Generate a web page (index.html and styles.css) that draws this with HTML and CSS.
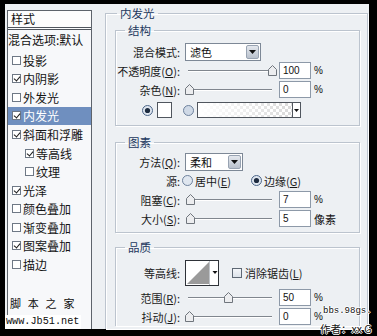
FILE: index.html
```html
<!DOCTYPE html>
<html lang="zh-CN">
<head>
<meta charset="utf-8">
<title>图层样式 - 内发光</title>
<link rel="stylesheet" href="styles.css">
</head>
<body>
<div class="screen">
  <div class="dialog">
    <aside class="sidebar">
      <div class="side-head">样式</div>
      <div class="side-blend">混合选项:默认</div>
      <ul class="fx-list">
        <li class="fx"><span class="cb"></span>投影</li>
        <li class="fx"><span class="cb on"></span>内阴影</li>
        <li class="fx"><span class="cb"></span>外发光</li>
        <li class="fx sel"><span class="cb on"></span>内发光</li>
        <li class="fx"><span class="cb on"></span>斜面和浮雕</li>
        <li class="fx sub"><span class="cb on"></span>等高线</li>
        <li class="fx sub"><span class="cb"></span>纹理</li>
        <li class="fx"><span class="cb on"></span>光泽</li>
        <li class="fx"><span class="cb"></span>颜色叠加</li>
        <li class="fx"><span class="cb"></span>渐变叠加</li>
        <li class="fx"><span class="cb on"></span>图案叠加</li>
        <li class="fx"><span class="cb"></span>描边</li>
      </ul>
      <div class="wm-cn">脚本之家</div>
      <div class="wm-url">www.Jb51.net</div>
    </aside>

    <main class="main">
      <fieldset class="grp outer">
        <legend>内发光</legend>

        <fieldset class="grp g-struct">
          <legend>结构</legend>
          <div class="row">
            <span class="lbl">混合模式:</span>
            <div class="select w-mode"><span class="sel-text">滤色</span><span class="sel-btn"><svg width="7" height="4" viewBox="0 0 7 4"><path d="M0 0H7L3.5 4Z" fill="#111"/></svg></span></div>
          </div>
          <div class="row">
            <span class="lbl">不透明度(<u>O</u>):</span>
            <div class="slider"><svg class="thumb" style="left:83px" width="9" height="11" viewBox="0 0 9 11"><path d="M4.5 0.5L8.5 4.5V10.5H0.5V4.5Z" fill="#ecedef" stroke="#6f757c"/></svg></div>
            <span class="num">100</span><span class="unit">%</span>
          </div>
          <div class="row">
            <span class="lbl">杂色(<u>N</u>):</span>
            <div class="slider"><svg class="thumb" style="left:0px" width="9" height="11" viewBox="0 0 9 11"><path d="M4.5 0.5L8.5 4.5V10.5H0.5V4.5Z" fill="#ecedef" stroke="#6f757c"/></svg></div>
            <span class="num">0</span><span class="unit">%</span>
          </div>
          <div class="row row-color">
            <svg class="radio r-first" width="11" height="11" viewBox="0 0 11 11"><circle cx="5.5" cy="5.5" r="5" fill="#dfe6ef" stroke="#4d6688"/><circle cx="5.5" cy="5.5" r="2.6" fill="#1d2b3f"/></svg>
            <span class="swatch"></span>
            <svg class="radio r-second" width="11" height="11" viewBox="0 0 11 11"><circle cx="5.5" cy="5.5" r="5" fill="#cfd9e6" stroke="#6d819c"/></svg>
            <div class="gradient"><span class="grad-bar"></span><span class="grad-btn"><svg width="5" height="3" viewBox="0 0 5 3"><path d="M0 0H5L2.5 3Z" fill="#111"/></svg></span></div>
          </div>
        </fieldset>

        <fieldset class="grp g-elem">
          <legend>图素</legend>
          <div class="row">
            <span class="lbl">方法(<u>Q</u>):</span>
            <div class="select w-method"><span class="sel-text">柔和</span><span class="sel-btn"><svg width="7" height="4" viewBox="0 0 7 4"><path d="M0 0H7L3.5 4Z" fill="#111"/></svg></span></div>
          </div>
          <div class="row">
            <span class="lbl">源:</span>
            <svg class="radio r-src" width="11" height="11" viewBox="0 0 11 11"><circle cx="5.5" cy="5.5" r="5" fill="#dfe6ef" stroke="#6d819c"/></svg>
            <span class="opt">居中(<u>E</u>)</span>
            <svg class="radio r-edge" width="11" height="11" viewBox="0 0 11 11"><circle cx="5.5" cy="5.5" r="5" fill="#dfe6ef" stroke="#4d6688"/><circle cx="5.5" cy="5.5" r="2.6" fill="#1d2b3f"/></svg>
            <span class="opt">边缘(<u>G</u>)</span>
          </div>
          <div class="row">
            <span class="lbl">阻塞(<u>C</u>):</span>
            <div class="slider"><svg class="thumb" style="left:1px" width="9" height="11" viewBox="0 0 9 11"><path d="M4.5 0.5L8.5 4.5V10.5H0.5V4.5Z" fill="#ecedef" stroke="#6f757c"/></svg></div>
            <span class="num">7</span><span class="unit">%</span>
          </div>
          <div class="row">
            <span class="lbl">大小(<u>S</u>):</span>
            <div class="slider"><svg class="thumb" style="left:1px" width="9" height="11" viewBox="0 0 9 11"><path d="M4.5 0.5L8.5 4.5V10.5H0.5V4.5Z" fill="#ecedef" stroke="#6f757c"/></svg></div>
            <span class="num">5</span><span class="unit unit-cn">像素</span>
          </div>
        </fieldset>

        <fieldset class="grp g-qual">
          <legend>品质</legend>
          <div class="row row-contour">
            <span class="lbl">等高线:</span>
            <div class="contour">
              <svg width="34" height="26" viewBox="0 0 34 26"><rect x="0.5" y="0.5" width="33" height="25" fill="#fff" stroke="#2e3238"/><path d="M2 24L24 2V24Z" fill="#9a9a9a"/><line x1="24.5" y1="1" x2="24.5" y2="25" stroke="#bfc3c8"/><path d="M27.5 11H32.5L30 14Z" fill="#111"/></svg>
            </div>
            <span class="cb2"></span>
            <span class="opt">消除锯齿(<u>L</u>)</span>
          </div>
          <div class="row">
            <span class="lbl">范围(<u>R</u>):</span>
            <div class="slider"><svg class="thumb" style="left:39px" width="9" height="11" viewBox="0 0 9 11"><path d="M4.5 0.5L8.5 4.5V10.5H0.5V4.5Z" fill="#ecedef" stroke="#6f757c"/></svg></div>
            <span class="num">50</span><span class="unit">%</span>
          </div>
          <div class="row">
            <span class="lbl">抖动(<u>J</u>):</span>
            <div class="slider"><svg class="thumb" style="left:0px" width="9" height="11" viewBox="0 0 9 11"><path d="M4.5 0.5L8.5 4.5V10.5H0.5V4.5Z" fill="#ecedef" stroke="#6f757c"/></svg></div>
            <span class="num">0</span><span class="unit">%</span>
          </div>
        </fieldset>
      </fieldset>
    </main>
  </div>
  <div class="wm-bbs">bbs.98gs.</div>
  <div class="wm-author">作者：xx G</div>
</div>
</body>
</html>
```

FILE: styles.css
```css
* { box-sizing: border-box; }
html, body { margin: 0; padding: 0; }
body {
  width: 377px;
  height: 336px;
  overflow: hidden;
  background: #000;
  font-family: "Noto Sans CJK SC", "Noto Sans", sans-serif;
  font-size: 12px;
  color: #1b1b1b;
}
u { text-decoration: underline; text-underline-offset: 1px; }

.screen {
  position: relative;
  width: 377px;
  height: 336px;
  padding: 4px 8px 7px 5px;
}
.dialog {
  display: flex;
  height: 325px;
  background: #edf0f3;
}

/* ---------- left style list ---------- */
.sidebar {
  margin: 6px 0 0 2px;
  width: 85px;
  border: 1px solid #5d636b;
  border-bottom: none;
  background: #f7f8fa;
  display: flex;
  flex-direction: column;
}
.side-head {
  height: 19px;
  padding-left: 3px;
  line-height: 16px;
  background: #fcfcfc;
  border-bottom: 3px double #4f555d;
  color: #111;
}
.side-blend {
  height: 21px;
  line-height: 20px;
  padding-left: 0;
  color: #111;
}
.fx-list {
  list-style: none;
  margin: 0;
  padding: 0;
}
.fx {
  height: 18.55px;
  display: flex;
  align-items: center;
  padding-left: 4px;
  color: #151515;
  white-space: nowrap;
}
.fx.sub { padding-left: 17px; }
.fx.sel { background: #6f8fbf; color: #fff; }
.cb {
  position: relative;
  width: 9px;
  height: 9px;
  margin-right: 2px;
  border: 1px solid #6e7885;
  background: #fff;
  flex: none;
}
.cb.on::after {
  content: "";
  position: absolute;
  left: 2px;
  top: 0;
  width: 3px;
  height: 5px;
  border: solid #1c1c1c;
  border-width: 0 1.5px 1.5px 0;
  transform: rotate(40deg);
}
.wm-cn {
  margin-top: auto;
  padding-left: 2px;
  height: 20px;
  line-height: 20px;
  font-size: 11px;
  letter-spacing: 6.8px;
  color: #0d0d0d;
}
.wm-url {
  margin: 2px 10px 0 -3px;
  height: 14px;
  line-height: 14px;
  padding-left: 1px;
  background: #fff;
  font-family: "Liberation Mono", monospace;
  font-size: 10.2px;
  color: #0d0d0d;
}

/* ---------- right panel ---------- */
.main {
  margin: 2px 0 0 13px;
  width: 263px;
  font-size: 11px;
}
.grp {
  margin: 0;
  min-width: 0;
  border: 1px solid #bcc4ce;
  box-shadow: inset 1px 1px 0 #fff, 1px 1px 0 #fff;
}
.grp > legend {
  padding: 0 3px;
  line-height: 14px;
  font-size: 11.5px;
  color: #23385e;
}
.outer {
  height: 323px;
  padding: 0 7px 0 9px;
  border-bottom: none;
}
.outer > legend { margin-left: 2px; }
.g-struct, .g-elem, .g-qual { padding: 0; }
.g-struct > legend, .g-elem > legend, .g-qual > legend { margin-left: 9px; }
.g-struct { margin-top: 3px; padding: 5px 0 4px; }
.g-elem { margin-top: 9px; padding: 3px 0 4px; }
.g-qual { margin-top: 7px; padding: 3px 0 0; border-bottom: none; }

.row {
  display: flex;
  align-items: center;
  height: 19px;
  white-space: nowrap;
}
.row-color { height: 22px; }
.row-contour { height: 31px; }
.lbl {
  width: 64px;
  margin-right: 5px;
  text-align: right;
  color: #1a1a1a;
}

.select {
  display: flex;
  height: 18px;
  border: 1px solid #7d8896;
  background: #fff;
}
.w-mode { width: 76px; }
.w-method { width: 58px; }
.sel-text {
  flex: 1;
  padding-left: 4px;
  line-height: 16px;
  color: #111;
}
.sel-btn {
  width: 13px;
  margin: 1px;
  border-radius: 2px;
  background: linear-gradient(#e4e8ee, #b9c1cc);
  border: 1px solid #98a3b2;
  display: flex;
  align-items: center;
  justify-content: center;
}

.slider {
  position: relative;
  width: 89px;
  height: 12px;
  background:
    linear-gradient(#80868e, #80868e) no-repeat 3px 5px / 84px 1px,
    linear-gradient(#fff, #fff) no-repeat 3px 6px / 84px 1px;
}
.thumb { position: absolute; top: 0; }
.num {
  margin-left: 5px;
  width: 32px;
  height: 17px;
  padding-left: 3px;
  border: 1px solid #8d99a8;
  background: #fff;
  font-family: "Liberation Sans", Arial, sans-serif;
  font-size: 10px;
  line-height: 15px;
  color: #111;
}
.unit {
  margin-left: 3px;
  font-family: "Liberation Sans", Arial, sans-serif;
  font-size: 10px;
  color: #111;
}
.unit.unit-cn {
  font-family: "Noto Sans CJK SC", sans-serif;
  font-size: 11px;
}

.radio { flex: none; }
.r-first { margin-left: 26px; }
.r-second { margin-left: 11px; }
.r-src { margin-left: -3px; }
.r-edge { margin-left: 20px; }
.opt { margin-left: 2px; color: #1a1a1a; }

.swatch {
  margin-left: 4px;
  width: 15px;
  height: 16px;
  border: 1px solid #50565e;
  background: #fff;
}
.gradient {
  display: flex;
  margin-left: 3px;
  height: 16px;
  border: 1px solid #50565e;
}
.grad-bar {
  width: 94px;
  background:
    linear-gradient(to right, #fff 0%, rgba(255,255,255,0.6) 45%, rgba(255,255,255,0) 100%),
    repeating-conic-gradient(#d9d9d9 0 25%, #fff 0 50%) 0 0 / 6px 6px;
}
.grad-btn {
  width: 8px;
  border-left: 1px solid #50565e;
  background: #fff;
  display: flex;
  align-items: center;
  justify-content: center;
}

.contour { width: 34px; height: 26px; }
.cb2 {
  margin-left: 13px;
  width: 10px;
  height: 10px;
  border: 1px solid #5e6874;
  background: linear-gradient(#f4f6f9, #dde3ea);
}
.cb2 + .opt { margin-left: 3px; }

/* watermark overlays */
.wm-bbs, .wm-author {
  position: absolute;
  color: #111;
  text-shadow: 1px 0 #fff, -1px 0 #fff, 0 1px #fff, 0 -1px #fff;
  white-space: nowrap;
}
.wm-bbs {
  left: 323px;
  top: 306px;
  font-family: "Liberation Mono", monospace;
  font-size: 9px;
  letter-spacing: 0;
}
.wm-author {
  left: 320px;
  top: 321px;
  font-family: "Noto Sans CJK SC", sans-serif;
  font-size: 10.5px;
}
```
